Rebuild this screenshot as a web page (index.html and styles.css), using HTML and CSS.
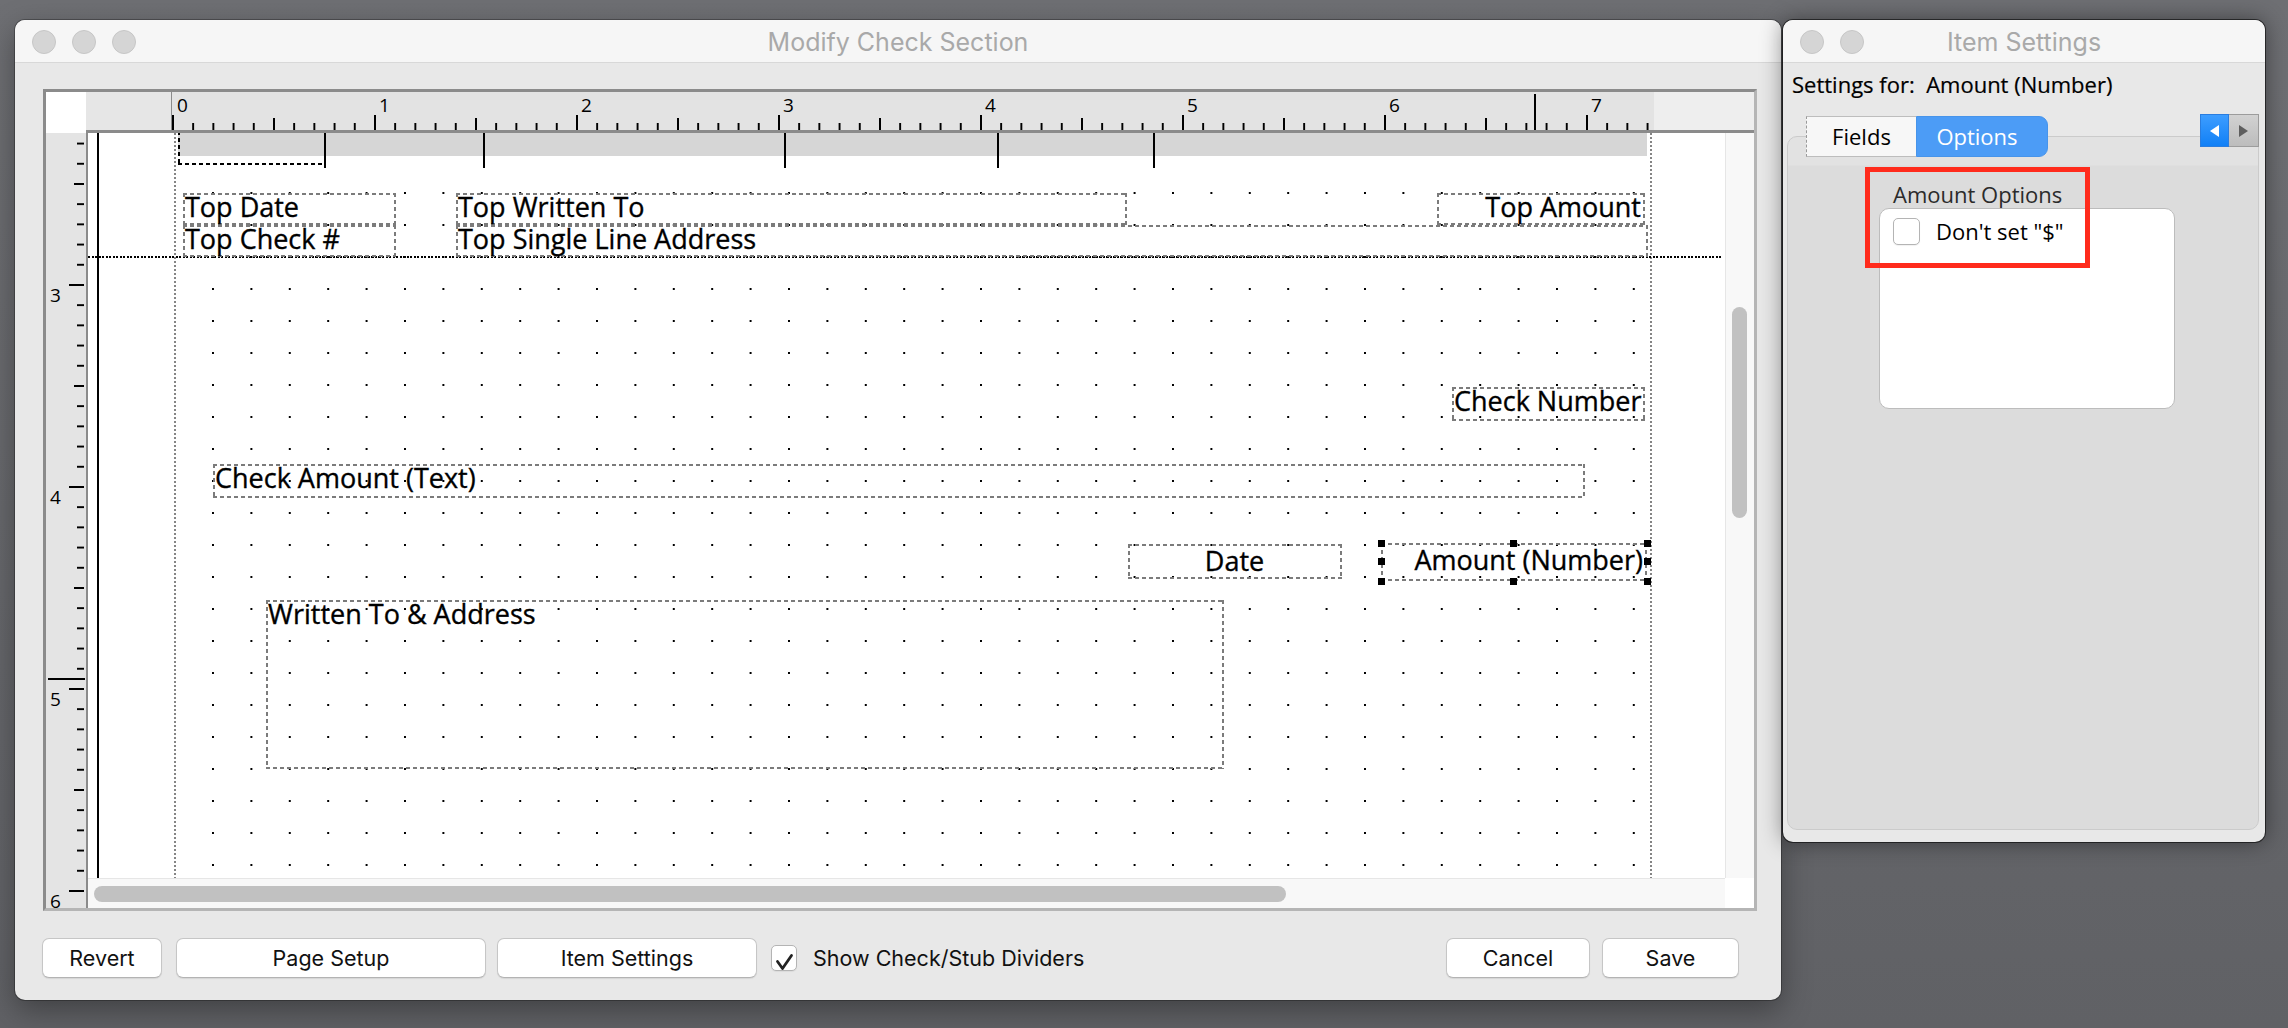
FILE: index.html
```html
<!DOCTYPE html>
<html lang="en">
<head>
    <meta charset="UTF-8">
    <title>Modify Check Section</title>
    <link rel="stylesheet" href="styles.css">
</head>
<body>
    <div class="window main-window">
        <div class="titlebar">
            <div class="lights"><span class="light"></span><span class="light"></span><span class="light"></span></div>
            <div class="title">Modify Check Section</div>
        </div>

        <div class="main-body">
            <div class="editor">
                <div class="corner"></div>

                <div class="hruler">
                    <div class="hruler-lead"></div>
                    <div class="hruler-scale">
                        <svg class="ticks" width="1482" height="38">
                            <defs>
                                <pattern id="h-minor" width="20.2" height="38" patternUnits="userSpaceOnUse"><rect y="31" width="2" height="7"/></pattern>
                                <pattern id="h-half" x="101" width="202" height="38" patternUnits="userSpaceOnUse"><rect y="26" width="2" height="12"/></pattern>
                                <pattern id="h-major" width="202" height="38" patternUnits="userSpaceOnUse"><rect y="23" width="2" height="15"/></pattern>
                            </defs>
                            <rect width="1477" height="38" fill="url(#h-minor)"/>
                            <rect width="1477" height="38" fill="url(#h-half)"/>
                            <rect width="1477" height="38" fill="url(#h-major)"/>
                            <rect x="1362" y="2" width="2" height="36"/>
                        </svg>
                        <div class="hruler-labels">
                            <span>0</span><span>1</span><span>2</span><span>3</span><span>4</span><span>5</span><span>6</span><span>7</span>
                        </div>
                    </div>
                    <div class="hruler-rest"></div>
                </div>

                <div class="hsep"></div>
                <div class="vsep"></div>

                <div class="vruler">
                    <svg class="ticks" width="40" height="775">
                        <defs>
                            <pattern id="v-minor" y="9.6" width="40" height="20.2" patternUnits="userSpaceOnUse"><rect x="31" width="7" height="2"/></pattern>
                            <pattern id="v-half" y="50" width="40" height="202" patternUnits="userSpaceOnUse"><rect x="28" width="10" height="2"/></pattern>
                            <pattern id="v-major" y="151" width="40" height="202" patternUnits="userSpaceOnUse"><rect x="23" width="15" height="2"/></pattern>
                        </defs>
                        <rect width="40" height="775" fill="url(#v-minor)"/>
                        <rect width="40" height="775" fill="url(#v-half)"/>
                        <rect width="40" height="775" fill="url(#v-major)"/>
                        <rect x="2" y="545" width="37" height="2"/>
                    </svg>
                    <div class="vruler-labels">
                        <span>3</span><span>4</span><span>5</span><span>6</span>
                    </div>
                </div>

                <div class="canvas">
                    <svg class="grid" width="1637" height="745">
                        <defs>
                            <pattern id="dots" x="124" y="59" width="38.4" height="32" patternUnits="userSpaceOnUse"><rect width="2" height="2"/></pattern>
                        </defs>
                        <rect x="124" y="59" width="1424" height="676" fill="url(#dots)"/>
                    </svg>

                    <div class="band"></div>
                    <div class="section-box"></div>
                    <div class="marker m1"></div>
                    <div class="marker m2"></div>
                    <div class="marker m3"></div>
                    <div class="marker m4"></div>
                    <div class="marker m5"></div>

                    <div class="margin-line"></div>
                    <div class="page-edge page-left"></div>
                    <div class="page-edge page-right"></div>
                    <div class="divider"></div>

                    <div class="field f-top-date">Top Date</div>
                    <div class="field f-top-check">Top Check #</div>
                    <div class="field f-top-written">Top Written To</div>
                    <div class="field f-top-address">Top Single Line Address</div>
                    <div class="field field-right f-top-amount">Top Amount</div>
                    <div class="field f-check-number">Check Number</div>
                    <div class="field f-check-amount">Check Amount (Text)</div>
                    <div class="field field-mid f-date">Date</div>
                    <div class="field field-mid field-right f-amount">
                        Amount (Number)
                        <span class="handle h-tl"></span><span class="handle h-tm"></span><span class="handle h-tr"></span>
                        <span class="handle h-ml"></span><span class="handle h-mr"></span>
                        <span class="handle h-bl"></span><span class="handle h-bm"></span><span class="handle h-br"></span>
                    </div>
                    <div class="field f-written-address">Written To &amp; Address</div>
                </div>

                <div class="vscroll"><div class="thumb"></div></div>
                <div class="hscroll"><div class="thumb"></div></div>
                <div class="scroll-corner"></div>
            </div>

            <div class="button-bar">
                <button class="btn btn-revert">Revert</button>
                <button class="btn btn-page">Page Setup</button>
                <button class="btn btn-item">Item Settings</button>
                <label class="check-label">
                    <span class="checkbox">
                        <svg width="26" height="26" viewBox="0 0 26 26"><path d="M6.5 16.5 L11.5 23.5 L20.5 10.5" fill="none" stroke="#222" stroke-width="2.8" stroke-linecap="round" stroke-linejoin="round"/></svg>
                    </span>
                    Show Check/Stub Dividers
                </label>
                <button class="btn btn-cancel">Cancel</button>
                <button class="btn btn-save">Save</button>
            </div>
        </div>
    </div>

    <div class="window settings-window">
        <div class="titlebar">
            <div class="lights"><span class="light"></span><span class="light"></span></div>
            <div class="title">Item Settings</div>
        </div>

        <div class="settings-for">Settings for:&nbsp; Amount (Number)</div>

        <div class="tabview">
            <div class="tab-row">
                <div class="tab tab-fields">Fields</div>
                <div class="tab tab-active">Options</div>
                <div class="arrows">
                    <span class="arrow arrow-left"><svg width="9" height="12"><polygon points="9,0 9,12 0,6"/></svg></span>
                    <span class="arrow arrow-right"><svg width="9" height="12"><polygon points="0,0 9,6 0,12"/></svg></span>
                </div>
            </div>

            <div class="panel">
                <div class="group">
                    <div class="group-label">Amount Options</div>
                    <div class="group-box">
                        <label class="option-row"><span class="checkbox checkbox-lg"></span>Don't set "$"</label>
                    </div>
                </div>
                <div class="highlight"></div>
            </div>
        </div>
    </div>
</body>
</html>
```

FILE: styles.css
```css
* {
    box-sizing: border-box;
}

body {
    margin: 0;
    width: 2288px;
    height: 1028px;
    overflow: hidden;
    position: relative;
    background: linear-gradient(#6e6f73, #606165);
    font-family: "Open Sans", sans-serif;
    color: #000;
}

/* windows */

.window {
    position: absolute;
    background-color: #e8e8e8;
    border-radius: 10px;
    overflow: hidden;
}

.main-window {
    left: 15px;
    top: 20px;
    width: 1766px;
    height: 980px;
    box-shadow: 0 0 0 1px rgba(0, 0, 0, 0.28), 0 10px 30px rgba(0, 0, 0, 0.35);
}

.settings-window {
    left: 1783px;
    top: 20px;
    width: 482px;
    height: 822px;
    box-shadow: 0 0 0 1px rgba(0, 0, 0, 0.55), 0 0 22px rgba(0, 0, 0, 0.45);
}

.titlebar {
    display: grid;
    grid-template-columns: 1fr auto 1fr;
    align-items: center;
    height: 43px;
    padding-top: 2px;
    background-color: #f6f6f6;
    border-bottom: 1px solid #d8d8d8;
}

.lights {
    display: flex;
    gap: 16px;
    padding-left: 17px;
}

.light {
    width: 24px;
    height: 24px;
    border-radius: 50%;
    background-color: #d5d5d5;
    border: 1px solid #c6c6c6;
}

.title {
    font: 25px "Inter", sans-serif;
    color: #a9a9a9;
}

/* main window */

.main-body {
    padding: 26px 24px 0 28px;
}

.editor {
    display: grid;
    grid-template-columns: 40px 2px 1637px 29px;
    grid-template-rows: 38px 3px 745px 30px;
    width: 1714px;
    height: 822px;
    border: 3px solid;
    border-color: #8b8b8b #b5b5b5 #b5b5b5 #8b8b8b;
    background-color: #fff;
}

.corner {
    grid-column: 1;
    grid-row: 1 / 3;
    background-color: #fff;
}

.hruler {
    grid-column: 2 / 5;
    grid-row: 1;
    display: flex;
}

.hruler-lead {
    width: 85px;
    background-color: #e6e6e6;
}

.hruler-scale {
    position: relative;
    width: 1483px;
    border-left: 1px solid #8b8b8b;
    background-color: #e3e3e3;
    overflow: hidden;
}

.hruler-rest {
    flex: 1;
    background-color: #eeeeee;
}

.ticks,
.grid {
    position: absolute;
    left: 0;
    top: 0;
    shape-rendering: crispEdges;
}

.hruler-labels {
    display: flex;
    padding: 4px 0 0 5px;
    font-size: 19px;
    line-height: 19px;
    white-space: nowrap;
}

.hruler-labels span {
    flex: none;
    width: 202px;
}

.hsep {
    grid-column: 2 / 5;
    grid-row: 2;
    background-color: #8b8b8b;
}

.vsep {
    grid-column: 2;
    grid-row: 3 / 5;
    background-color: #8b8b8b;
}

.vruler {
    grid-column: 1;
    grid-row: 3 / 5;
    position: relative;
    overflow: hidden;
    background-color: #e4e4e4;
}

.vruler-labels {
    padding: 153px 0 0 4px;
    font-size: 19px;
    line-height: 19px;
}

.vruler-labels span {
    display: block;
    height: 202px;
}

/* layout canvas: items sit at their page positions */

.canvas {
    grid-column: 3;
    grid-row: 3;
    position: relative;
    overflow: hidden;
    background-color: #fff;
}

.band {
    position: absolute;
    left: 90px;
    top: 0;
    width: 1469px;
    height: 23px;
    background-color: #d6d6d6;
}

.marker {
    position: absolute;
    top: 0;
    width: 2px;
    height: 35px;
    background-color: #000;
}

.m1 { left: 236px; }
.m2 { left: 395px; }
.m3 { left: 696px; }
.m4 { left: 909px; }
.m5 { left: 1065px; }

.margin-line {
    position: absolute;
    left: 9px;
    top: 0;
    width: 2px;
    height: 745px;
    background-color: #000;
}

.page-edge {
    position: absolute;
    top: 0;
    width: 2px;
    height: 745px;
    background: repeating-linear-gradient(180deg, #858585 0 2px, transparent 2px 4px);
}

.page-left { left: 86px; }
.page-right { left: 1562px; }

.divider {
    position: absolute;
    left: 0;
    top: 123px;
    width: 1635px;
    height: 2px;
    background: repeating-linear-gradient(90deg, #000 0 2px, transparent 2px 3.5px);
}

.field,
.section-box {
    --dash: #7b7b7b;
    position: absolute;
    background:
        repeating-linear-gradient(90deg, var(--dash) 0 4px, transparent 4px 7px) 0 0 / 100% 2px no-repeat,
        repeating-linear-gradient(90deg, var(--dash) 0 4px, transparent 4px 7px) 0 100% / 100% 2px no-repeat,
        repeating-linear-gradient(180deg, var(--dash) 0 4px, transparent 4px 7px) 0 0 / 2px 100% no-repeat,
        repeating-linear-gradient(180deg, var(--dash) 0 4px, transparent 4px 7px) 100% 0 / 2px 100% no-repeat;
}

.section-box {
    --dash: #000;
    left: 90px;
    top: -2px;
    width: 148px;
    height: 34px;
}

.field {
    height: 32px;
    padding: 2px 3px 0 2px;
    font-size: 27px;
    line-height: 24px;
    white-space: nowrap;
    -webkit-text-stroke: 0.35px #000;
}

.field-right {
    text-align: right;
    padding-right: 4px;
}

.field-mid {
    padding-top: 5px;
}

.f-top-date { left: 95px; top: 60px; width: 213px; }
.f-top-check { left: 95px; top: 92px; width: 213px; }
.f-top-written { left: 368px; top: 60px; width: 671px; }
.f-top-address { left: 368px; top: 92px; width: 1192px; }
.f-top-amount { left: 1349px; top: 60px; width: 208px; }
.f-check-number { left: 1364px; top: 254px; width: 193px; height: 34px; }
.f-check-amount { left: 125px; top: 331px; width: 1372px; height: 34px; }
.f-date { left: 1040px; top: 411px; width: 214px; height: 35px; text-align: center; }
.f-amount { left: 1293px; top: 410px; width: 266px; height: 38px; }
.f-written-address { left: 178px; top: 467px; width: 958px; height: 169px; }

.handle {
    position: absolute;
    width: 7px;
    height: 7px;
    background-color: #000;
}

.h-tl { left: -3px; top: -3px; }
.h-tm { left: calc(50% - 4px); top: -3px; }
.h-tr { right: -4px; top: -3px; }
.h-ml { left: -3px; top: calc(50% - 4px); }
.h-mr { right: -4px; top: calc(50% - 4px); }
.h-bl { left: -3px; bottom: -4px; }
.h-bm { left: calc(50% - 4px); bottom: -4px; }
.h-br { right: -4px; bottom: -4px; }

/* scroll bars */

.vscroll {
    grid-column: 4;
    grid-row: 3;
    padding: 174px 0 0 6px;
    background-color: #f8f8f8;
    border-left: 1px solid #e6e6e6;
}

.vscroll .thumb {
    width: 15px;
    height: 211px;
    border-radius: 8px;
    background-color: #c1c1c1;
}

.hscroll {
    grid-column: 3;
    grid-row: 4;
    padding: 7px 0 0 6px;
    background-color: #f8f8f8;
    border-top: 1px solid #e6e6e6;
}

.hscroll .thumb {
    width: 1192px;
    height: 16px;
    border-radius: 8px;
    background-color: #c1c1c1;
}

.scroll-corner {
    grid-column: 4;
    grid-row: 4;
    background-color: #fff;
}

/* bottom buttons */

.button-bar {
    display: flex;
    align-items: center;
    height: 40px;
    margin: 27px 0 0 -1px;
    padding-right: 18px;
    font: 21.5px "Inter", sans-serif;
    color: #111;
}

.btn {
    height: 40px;
    padding: 0;
    border: 1px solid #c6c6c6;
    border-bottom-color: #b3b3b3;
    border-radius: 7px;
    background-color: #fff;
    box-shadow: 0 1px 1px rgba(0, 0, 0, 0.08);
    font: inherit;
    color: inherit;
}

.btn-revert { width: 120px; }
.btn-page { width: 310px; margin-left: 14px; }
.btn-item { width: 260px; margin-left: 11px; }
.btn-cancel { width: 144px; margin-left: auto; }
.btn-save { width: 137px; margin-left: 12px; }

.check-label {
    display: flex;
    align-items: center;
    gap: 16px;
    margin-left: 14px;
}

.checkbox {
    flex: none;
    width: 26px;
    height: 26px;
    border: 1px solid #b4b4b4;
    border-radius: 5px;
    background-color: #fff;
    box-shadow: 0 1px 1px rgba(0, 0, 0, 0.06);
}

.checkbox svg {
    display: block;
    margin: -1px;
}

.checkbox-lg {
    width: 27px;
    height: 27px;
}

/* item settings window */

.settings-for {
    height: 36px;
    padding: 6px 9px 0;
    font-size: 22px;
    line-height: 30px;
    -webkit-text-stroke: 0.2px #000;
}

.tabview {
    margin: 17px 6px 0 4px;
}

.tab-row {
    position: relative;
    z-index: 1;
    display: flex;
    align-items: flex-start;
    height: 41px;
    padding-left: 19px;
}

.tab {
    height: 41px;
    border: 1px solid #bdbdbd;
    background-color: #f7f7f7;
    font-size: 22px;
    line-height: 38px;
    text-align: center;
}

.tab-fields {
    width: 110px;
    border-left: 1px dashed #9a9a9a;
    border-right: none;
}

.tab-active {
    width: 132px;
    padding-right: 10px;
    border-color: #4794ea;
    border-radius: 0 9px 9px 0;
    background-color: #4c9cf6;
    color: #fff;
}

.arrows {
    display: flex;
    height: 33px;
    margin: -2px 0 0 auto;
}

.arrow {
    display: flex;
    align-items: center;
    justify-content: center;
    width: 30px;
    border: 1px solid #9c9c9c;
}

.arrow-left {
    width: 29px;
    border-color: #2a7ddf;
    background: linear-gradient(#3d9dff, #1180f6);
    fill: #fff;
}

.arrow-right {
    border-left: none;
    background: linear-gradient(#d2d2d2, #bcbcbc);
    fill: #5e5e5e;
}

.panel {
    position: relative;
    height: 694px;
    margin-top: -21px;
    border: 1px solid #cbcbcb;
    border-radius: 10px;
    background: linear-gradient(#e2e2e2 0, #e2e2e2 28px, #dcdcdc 29px);
}

.group {
    width: 296px;
    margin: 44px 0 0 91px;
}

.group-label {
    padding-left: 14px;
    font-size: 22px;
    line-height: 26px;
    color: #2b2b2b;
}

.group-box {
    height: 201px;
    margin-top: 1px;
    padding: 9px 13px;
    border: 1px solid #bcbcbc;
    border-radius: 10px;
    background-color: #fff;
}

.option-row {
    display: flex;
    align-items: center;
    gap: 16px;
    font-size: 22px;
    line-height: 27px;
}

.highlight {
    position: absolute;
    left: 77px;
    top: 30px;
    width: 225px;
    height: 101px;
    border: 5px solid #ff2b1c;
}
```
